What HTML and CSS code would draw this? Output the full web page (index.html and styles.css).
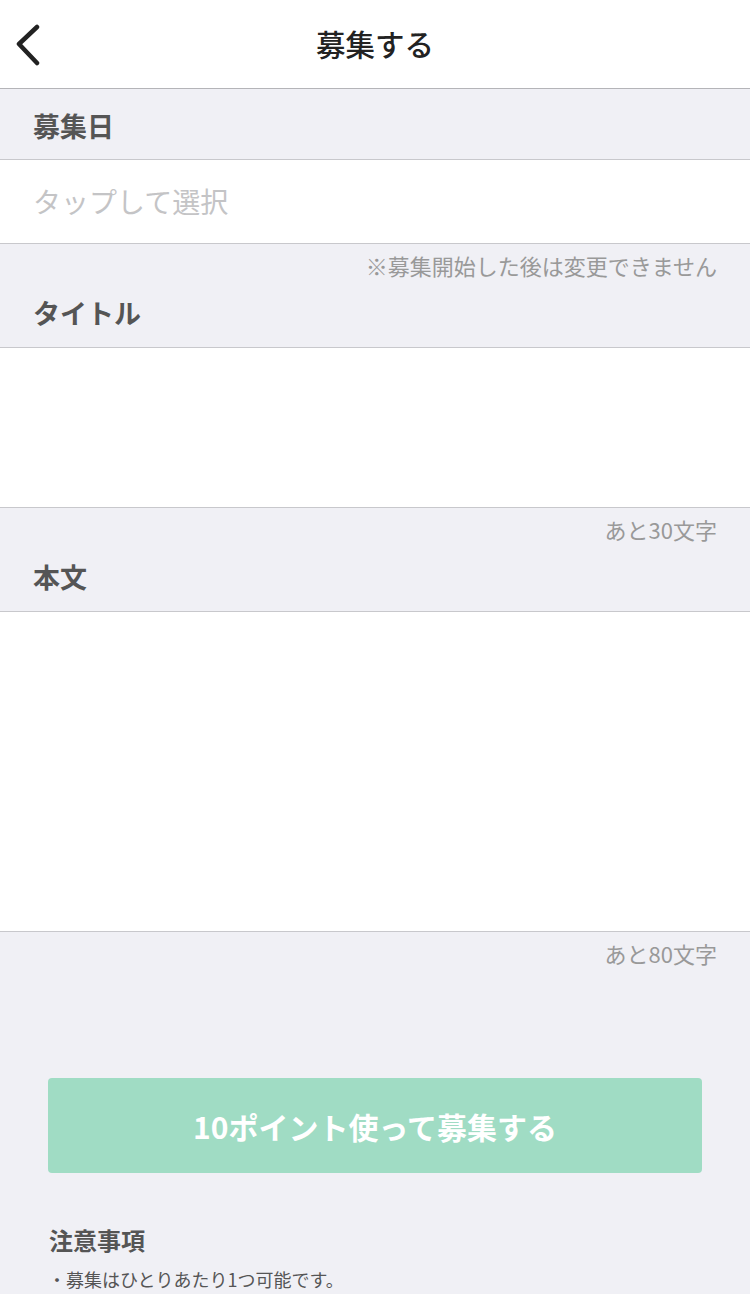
FILE: index.html
```html
<!DOCTYPE html>
<html lang="ja">
<head>
<meta charset="utf-8">
<title>募集する</title>
<link rel="stylesheet" href="styles.css">
</head>
<body>
<header class="nav">
  <button class="back" aria-label="戻る">
    <svg width="30" height="44" viewBox="0 0 30 44"><path d="M21 5 L3 22 L21 41" fill="none" stroke="#222" stroke-width="4.5" stroke-linecap="round" stroke-linejoin="round"/></svg>
  </button>
  <h1 class="nav-title">募集する</h1>
</header>

<section class="group group-first">
  <div class="label">募集日</div>
</section>
<div class="field field-input">タップして選択</div>

<section class="group group-note">
  <div class="note">※募集開始した後は変更できません</div>
  <div class="label">タイトル</div>
</section>
<div class="field field-title"></div>

<section class="group group-note">
  <div class="note">あと30文字</div>
  <div class="label">本文</div>
</section>
<div class="field field-body"></div>

<section class="footer">
  <div class="note">あと80文字</div>
  <button class="submit">10ポイント使って募集する</button>
  <h2 class="caution-title">注意事項</h2>
  <ul class="caution-list">
    <li>・募集はひとりあたり1つ可能です。</li>
  </ul>
</section>
</body>
</html>
```

FILE: styles.css
```css
* { box-sizing: border-box; }
html, body {
  margin: 0;
  padding: 0;
  background: #f0f0f5;
  font-family: "Noto Sans CJK JP", "Noto Sans", sans-serif;
}
.nav {
  height: 89px;
  background: #fff;
  border-bottom: 1px solid #b4b4b8;
  display: flex;
  align-items: center;
  justify-content: center;
  position: relative;
}
.back {
  position: absolute;
  left: 16px;
  top: 22px;
  padding: 0;
  border: 0;
  background: none;
  display: flex;
}
.nav-title {
  margin: 0;
  font-size: 29.5px;
  font-weight: 500;
  color: #222;
  line-height: 1;
  padding-top: 0;
}
.group {
  background: #f0f0f5;
  padding: 0 33px;
}
.group-first {
  height: 70px;
  padding-top: 22px;
}
.label {
  font-size: 27px;
  font-weight: 700;
  color: #555;
  line-height: 30px;
}
.group-note {
  height: 103px;
  padding-top: 7px;
}
.group-note .label {
  margin-top: 19px;
}
.note {
  font-size: 22px;
  color: #999;
  line-height: 28px;
  text-align: right;
}
.field {
  background: #fff;
  border-top: 1px solid #c8c8cc;
  border-bottom: 1px solid #c8c8cc;
}
.field-input {
  height: 85px;
  line-height: 83px;
  padding: 0 33px;
  font-size: 28px;
  color: #c4c4c6;
}
.field-title { height: 161px; }
.field-body { height: 321px; }
.footer {
  padding: 7px 0 0;
}
.footer .note {
  padding-right: 33px;
}
.submit {
  display: flex;
  align-items: center;
  justify-content: center;
  width: calc(100% - 96px);
  margin: 111px 48px 0;
  height: 95px;
  border: 0;
  border-radius: 4px;
  background: #a0dcc4;
  color: #fff;
  font-family: inherit;
  font-size: 30px;
  font-weight: 700;
  padding: 0;
}
.caution-title {
  margin: 51px 49px 0;
  font-size: 24px;
  font-weight: 700;
  color: #555;
  line-height: 32px;
}
.caution-list {
  list-style: none;
  margin: 10px 0 0;
  padding: 0 0 0 48px;
  font-size: 18px;
  line-height: 26px;
  color: #555;
}
```
